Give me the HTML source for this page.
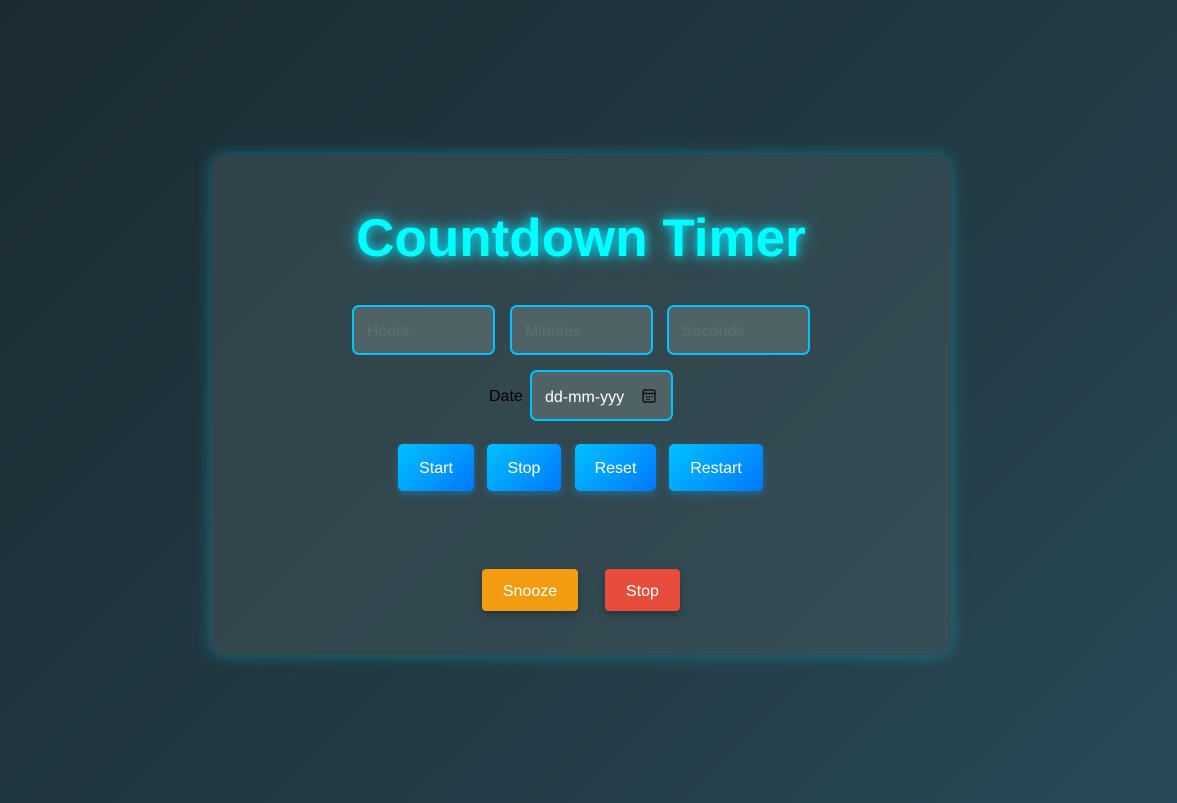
<!DOCTYPE html>
<html><head><style>
*{margin:0;padding:0;box-sizing:border-box}
body{width:1177px;height:803px;overflow:hidden;background:linear-gradient(135deg,#1b2b32 0%,#233b45 60%,#284a58 100%);font-family:"Liberation Sans",sans-serif;position:relative}
.card{position:absolute;left:211px;top:155px;width:740px;height:500px;border-radius:14px;background:rgba(70,90,95,0.45);box-shadow:0 0 16px rgba(0,230,255,0.35)}
h1{position:absolute;left:211px;width:740px;top:208px;text-align:center;color:#00ffff;font-size:53px;font-weight:bold;text-shadow:0 0 10px #00e5ff,0 0 20px rgba(0,229,255,.6)}
.in{position:absolute;height:50px;width:143px;border:2px solid #00c3ff;border-radius:7px;background:#4f6266;color:#5e6f72;font-size:16px;padding:0 0 0 13px;line-height:50px}
.lbl{position:absolute;left:489px;top:388px;font-size:16px;color:#000}
.btn{position:absolute;top:444px;height:47px;border-radius:5px;background:linear-gradient(135deg,#00c2ff,#0077ff);color:#fff;font-size:16px;text-align:center;line-height:49px;box-shadow:0 3px 8px rgba(0,170,255,.35)}
.b2{position:absolute;top:569px;height:42px;border-radius:4px;color:#fff;font-size:16px;text-align:center;line-height:45px;box-shadow:0 3px 8px rgba(0,0,0,.3)}
</style></head><body>
<div class="card"></div>
<h1>Countdown Timer</h1>
<div class="in" style="left:352px;top:305px">Hours</div>
<div class="in" style="left:510px;top:305px">Minutes</div>
<div class="in" style="left:667px;top:305px">Seconds</div>
<div class="lbl">Date</div>
<div class="in" style="left:530px;top:370px;height:51px;color:#fff;line-height:51px">dd-mm-yyy<svg style="position:absolute;left:110px;top:17px" width="14" height="14" viewBox="0 0 14 14"><rect x="1" y="1" width="12" height="12" rx="2" fill="none" stroke="#111" stroke-width="1.5"/><line x1="1" y1="4.5" x2="13" y2="4.5" stroke="#111" stroke-width="1.5"/><rect x="4" y="7" width="1.5" height="1.5" fill="#111"/><rect x="6.5" y="7" width="1.5" height="1.5" fill="#111"/><rect x="9" y="7" width="1.5" height="1.5" fill="#111"/><rect x="4" y="9.5" width="1.5" height="1.5" fill="#111"/><rect x="6.5" y="9.5" width="1.5" height="1.5" fill="#111"/></svg></div>
<div class="btn" style="left:398px;width:76px">Start</div>
<div class="btn" style="left:487px;width:74px">Stop</div>
<div class="btn" style="left:575px;width:81px">Reset</div>
<div class="btn" style="left:669px;width:94px">Restart</div>
<div class="b2" style="left:482px;width:96px;background:#f39c12">Snooze</div>
<div class="b2" style="left:605px;width:75px;background:#e74c3c">Stop</div>
</body></html>
